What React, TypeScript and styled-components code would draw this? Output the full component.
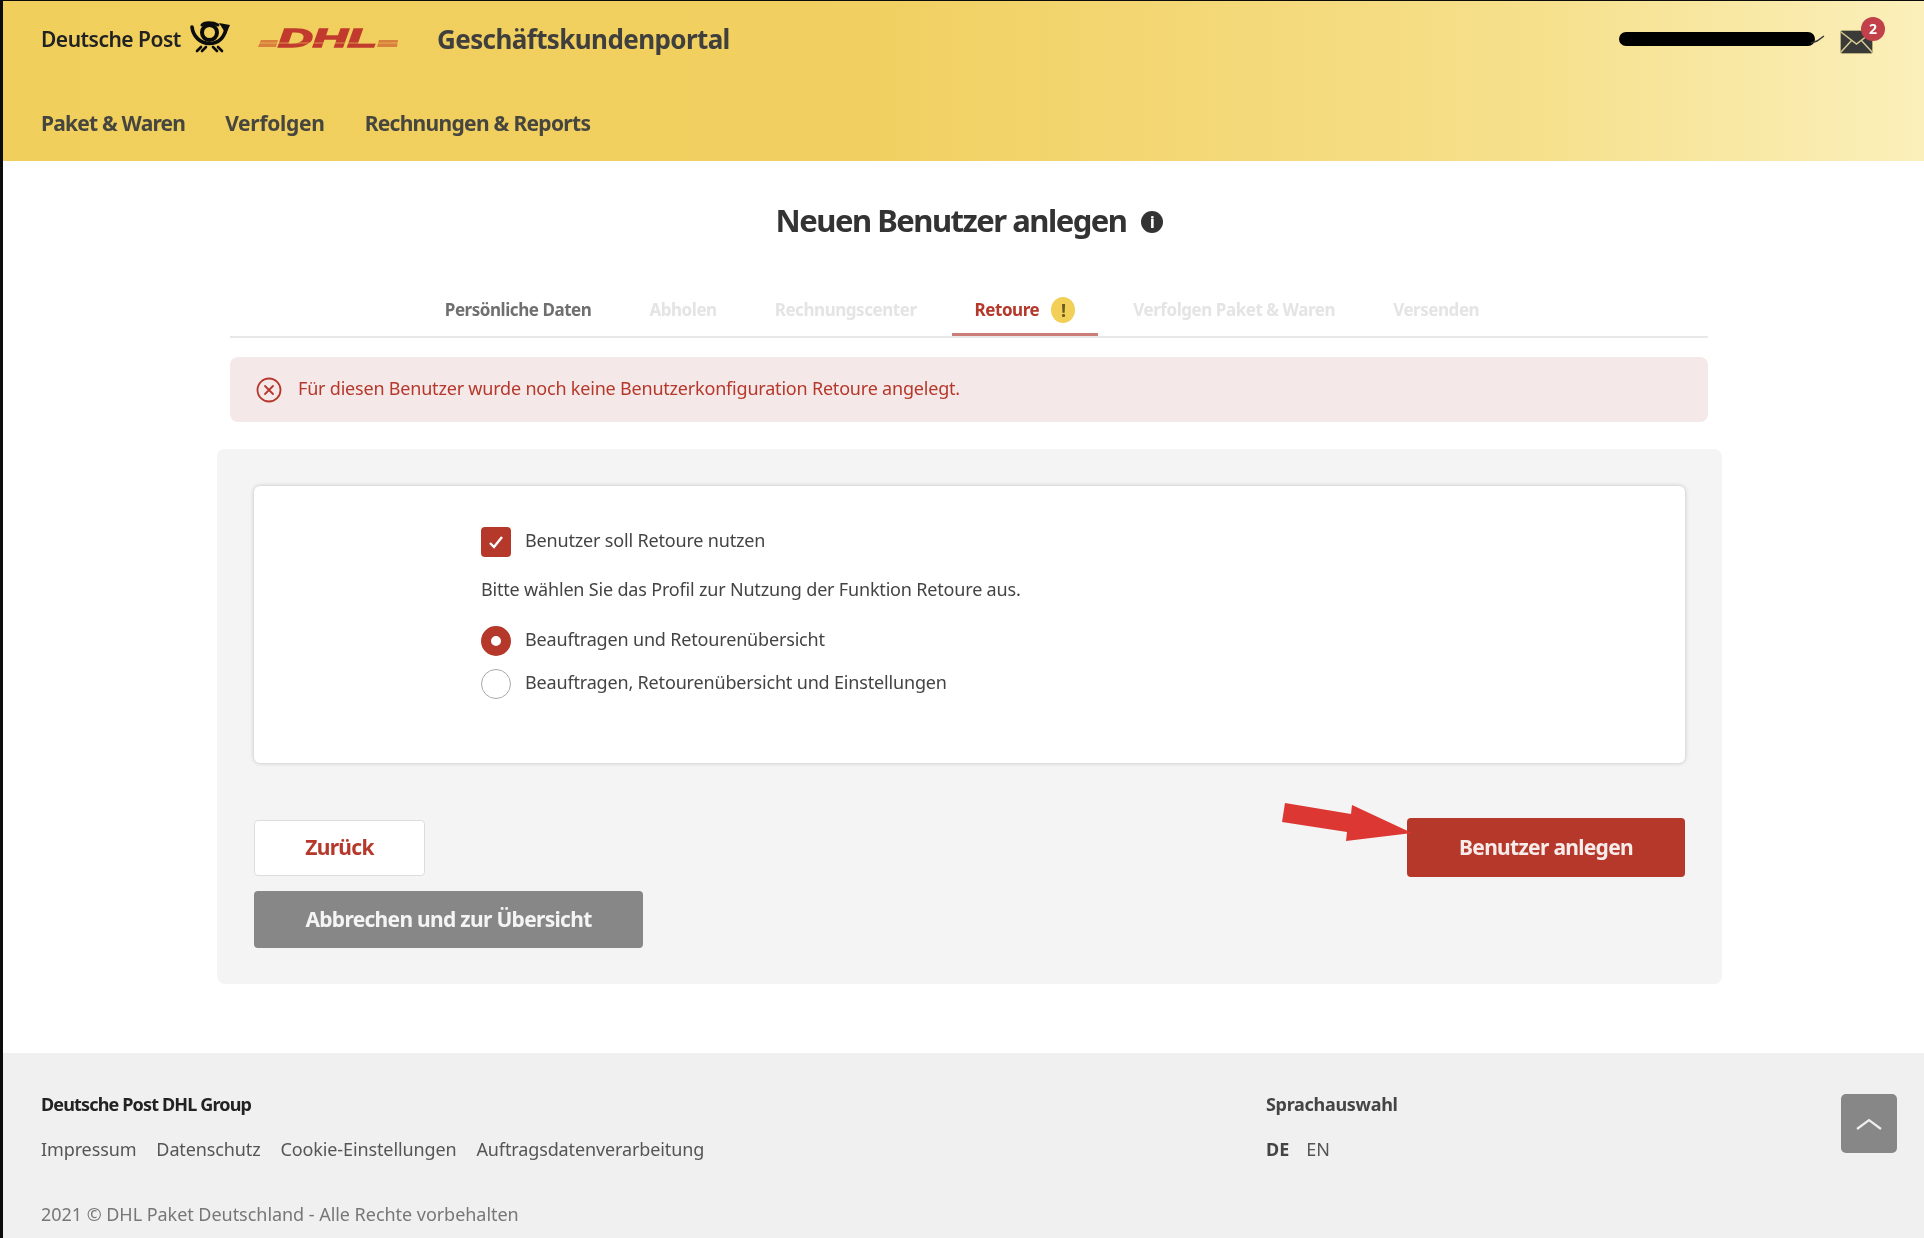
import React from 'react'
import styled, { createGlobalStyle } from 'styled-components'

const GlobalStyle = createGlobalStyle`
    html, body {
        margin: 0;
        padding: 0;
        background: #0c0c0c;
    }
    * {
        box-sizing: border-box;
    }
`

const tabs = [
    { label: 'Persönliche Daten', state: 'done' },
    { label: 'Abholen', state: 'off' },
    { label: 'Rechnungscenter', state: 'off' },
    { label: 'Retoure', state: 'active' },
    { label: 'Verfolgen Paket & Waren', state: 'off' },
    { label: 'Versenden', state: 'off' },
]

const footerLinks = ['Impressum', 'Datenschutz', 'Cookie-Einstellungen', 'Auftragsdatenverarbeitung']

const PostHorn = () => (
    <svg width="40" height="33" viewBox="0 0 40 33">
        <g fill="none" stroke="#0c0c0c" strokeLinecap="round">
            <circle cx="19.5" cy="12.5" r="7.5" strokeWidth="4" />
            <path d="M2 7 C3 16 10 23.5 19.5 23.5 C28 23.5 34 18 36 9" strokeWidth="3.6" />
            <path d="M12 5 C14 2 23 2 28 5" strokeWidth="3" />
            <path d="M7 31 L11 27 M12 31 L16 27 M23 27 L27 31 M28 27 L32 31" strokeWidth="2.6" />
        </g>
        <polygon points="29,3 40,5 36,14" fill="#0c0c0c" />
    </svg>
)

const DhlLogo = () => (
    <svg width="140" height="24" viewBox="0 0 140 24">
        <polygon points="3,13 20,13 18,20 0,20" fill="#d9803c" />
        <polygon points="121,13 140,13 139,20 119,20" fill="#d9803c" />
        <text
            x="20"
            y="20"
            fontFamily="'Liberation Sans', sans-serif"
            fontSize="25"
            fontWeight="700"
            fontStyle="italic"
            textLength="99"
            lengthAdjust="spacingAndGlyphs"
            stroke="#c23a2e"
            strokeWidth="1.4"
            fill="#c23a2e"
        >
            DHL
        </text>
        <rect x="0" y="15.5" width="140" height="1" fill="#f0cf5c" opacity="0.6" />
    </svg>
)

const App = () => {
    return (
        <>
            <GlobalStyle />
            <Page>
                <Header>
                    <TopRow>
                        <Brand>Deutsche Post</Brand>
                        <HornSlot><PostHorn /></HornSlot>
                        <DhlSlot><DhlLogo /></DhlSlot>
                        <PortalTitle>Geschäftskundenportal</PortalTitle>
                        <UserArea>
                            <svg width="206" height="16" viewBox="0 0 206 16">
                                <rect x="0" y="1" width="196" height="14" rx="7" fill="#000" />
                                <path d="M192 12 L198 10 L205 5" stroke="#333" strokeWidth="1.4" fill="none" />
                            </svg>
                            <MailWrap>
                                <svg width="33" height="24" viewBox="0 0 33 24">
                                    <rect x="0.5" y="0.5" width="32" height="23" rx="2" fill="#3a3a38" stroke="#b9ad78" />
                                    <path d="M1 2 L16.5 14 L32 2 M1 22 L12 10 M32 22 L21 10" stroke="#d6cb92" strokeWidth="1.5" fill="none" />
                                </svg>
                                <MailBadge>2</MailBadge>
                            </MailWrap>
                        </UserArea>
                    </TopRow>
                    <Nav>
                        <NavItem>Paket &amp; Waren</NavItem>
                        <NavItem>Verfolgen</NavItem>
                        <NavItem>Rechnungen &amp; Reports</NavItem>
                    </Nav>
                </Header>

                <Main>
                    <Heading>
                        <h1>Neuen Benutzer anlegen</h1>
                        <InfoDot>i</InfoDot>
                    </Heading>

                    <TabBar>
                        {tabs.map((tab) => (
                            <Tab key={tab.label} $state={tab.state}>
                                {tab.label}
                                {tab.state === 'active' && <WarnBadge>!</WarnBadge>}
                            </Tab>
                        ))}
                    </TabBar>

                    <Alert>
                        <svg width="26" height="26" viewBox="0 0 26 26" fill="none" stroke="#b5382b" strokeWidth="1.8">
                            <circle cx="13" cy="13" r="11.5" />
                            <path d="M9 9 L17 17 M17 9 L9 17" strokeLinecap="round" />
                        </svg>
                        <AlertText>Für diesen Benutzer wurde noch keine Benutzerkonfiguration Retoure angelegt.</AlertText>
                    </Alert>

                    <Panel>
                        <Card>
                            <CheckRow>
                                <CheckBox>
                                    <svg width="16" height="14" viewBox="0 0 16 14" fill="none" stroke="#fff" strokeWidth="2.4">
                                        <path d="M2 8 L6 12 L14 2" />
                                    </svg>
                                </CheckBox>
                                <OptionText>Benutzer soll Retoure nutzen</OptionText>
                            </CheckRow>
                            <Hint>Bitte wählen Sie das Profil zur Nutzung der Funktion Retoure aus.</Hint>
                            <RadioRow>
                                <Radio $checked />
                                <OptionText>Beauftragen und Retourenübersicht</OptionText>
                            </RadioRow>
                            <RadioRow>
                                <Radio />
                                <OptionText>Beauftragen, Retourenübersicht und Einstellungen</OptionText>
                            </RadioRow>
                        </Card>

                        <Actions>
                            <LeftActions>
                                <BackButton>Zurück</BackButton>
                                <CancelButton>Abbrechen und zur Übersicht</CancelButton>
                            </LeftActions>
                            <SubmitWrap>
                                <Arrow width="132" height="40" viewBox="0 0 132 40">
                                    <polygon points="3,0 0,19 65,29 64,38 130,30 70,2 69,11" fill="#dc3732" />
                                </Arrow>
                                <SubmitButton>Benutzer anlegen</SubmitButton>
                            </SubmitWrap>
                        </Actions>
                    </Panel>
                </Main>

                <Footer>
                    <FooterLeft>
                        <FooterTitle>Deutsche Post DHL Group</FooterTitle>
                        <FooterLinks>
                            {footerLinks.map((link) => <FooterLink key={link}>{link}</FooterLink>)}
                        </FooterLinks>
                        <Copyright>2021 © DHL Paket Deutschland - Alle Rechte vorbehalten</Copyright>
                    </FooterLeft>
                    <Language>
                        <LanguageTitle>Sprachauswahl</LanguageTitle>
                        <LanguageRow>
                            <strong>DE</strong>
                            <span>EN</span>
                        </LanguageRow>
                    </Language>
                    <ScrollTop>
                        <svg width="28" height="16" viewBox="0 0 28 16" fill="none" stroke="#eee" strokeWidth="2.2">
                            <path d="M2 13 L14 4 L26 13" />
                        </svg>
                    </ScrollTop>
                </Footer>
            </Page>
        </>
    )
}

const fontStack = `"Noto Sans", "Liberation Sans", sans-serif`

const Page = styled.div`
    width: 1924px;
    height: 1238px;
    padding: 1px 0 0 3px;
    font-family: ${fontStack};
    color: #333;
    overflow: hidden;
    filter: blur(0.6px);
`

const Header = styled.header`
    height: 160px;
    padding: 0 0 0 38px;
    background: linear-gradient(90deg, #f0cf5c 0%, #f1d061 45%, #f6e08c 80%, #fbf0bb 100%);
`

const TopRow = styled.div`
    height: 76px;
    display: flex;
    align-items: center;
`

const Brand = styled.span`
    width: 149px;
    font-size: 21px;
    font-weight: 600;
    letter-spacing: -0.5px;
    white-space: nowrap;
    color: #222;
`

const HornSlot = styled.div`
    width: 68px;
    display: flex;
    margin-top: -6px;
`

const DhlSlot = styled.div`
    width: 179px;
    display: flex;
`

const PortalTitle = styled.span`
    font-size: 26px;
    font-weight: 700;
    letter-spacing: -0.6px;
    color: #3f3f3d;
`

const UserArea = styled.div`
    margin-left: auto;
    padding-right: 51px;
    display: flex;
    align-items: center;
    gap: 15px;
`

const MailWrap = styled.div`
    position: relative;
    display: flex;
    margin-top: 6px;
`

const MailBadge = styled.span`
    position: absolute;
    top: -13px;
    right: -12px;
    width: 24px;
    height: 24px;
    border-radius: 50%;
    background: #c2404a;
    color: #fff;
    font-size: 14px;
    font-weight: 700;
    text-align: center;
    line-height: 24px;
`

const Nav = styled.nav`
    display: flex;
    gap: 40px;
    margin-top: 33px;
`

const NavItem = styled.a`
    font-size: 21px;
    font-weight: 700;
    letter-spacing: -0.8px;
    line-height: 26px;
    color: #46463f;

    &:nth-child(2) {
        letter-spacing: -0.3px;
    }
    &:nth-child(3) {
        letter-spacing: -0.7px;
    }
`

const Main = styled.main`
    height: 892px;
    padding: 30px 202px 0 214px;
    background: #fff;
`

const Heading = styled.div`
    height: 58px;
    display: flex;
    justify-content: center;
    align-items: center;
    gap: 15px;

    h1 {
        margin: 0;
        font-size: 31px;
        font-weight: 700;
        letter-spacing: -1.5px;
        color: #333;
    }
`

const InfoDot = styled.span`
    width: 22px;
    height: 22px;
    margin-top: 3px;
    border-radius: 50%;
    background: #333;
    color: #fff;
    font-size: 15px;
    font-weight: 800;
    line-height: 22px;
    text-align: center;
`

const TabBar = styled.div`
    height: 50px;
    margin: 39px 14px 0 13px;
    padding-right: 14px;
    display: flex;
    justify-content: center;
    gap: 12px;
    border-bottom: 2px solid #e8e8e8;
`

const tabColor = (state: string) => {
    if (state === 'active') return '#b5382b'
    if (state === 'done') return '#6f6f6f'
    return '#e4e4e4'
}

const Tab = styled.div<{ $state: string }>`
    height: 48px;
    padding: 0 23px 2px;
    display: flex;
    align-items: center;
    gap: 12px;
    font-size: 17px;
    font-weight: 700;
    letter-spacing: -0.45px;
    color: ${(props) => tabColor(props.$state)};
    border-bottom: ${(props) => (props.$state === 'active' ? '3px solid #cc7f78' : '3px solid transparent')};
`

const WarnBadge = styled.span`
    width: 24px;
    height: 26px;
    border-radius: 50%;
    background: #f2cf57;
    color: #6a5a20;
    font-size: 18px;
    line-height: 26px;
    text-align: center;
`

const Alert = styled.div`
    height: 65px;
    margin: 19px 14px 0 13px;
    padding: 0 0 0 26px;
    display: flex;
    align-items: center;
    gap: 16px;
    border-radius: 8px;
    background: #f5e8e9;
    color: #b5382b;
    font-size: 18px;
    letter-spacing: -0.2px;
`

const AlertText = styled.span`
    margin-top: -4px;
`

const Panel = styled.section`
    height: 535px;
    margin-top: 27px;
    padding: 37px 37px 0;
    border-radius: 8px;
    background: #f4f4f4;
`

const Card = styled.div`
    height: 277px;
    padding: 41px 0 0 227px;
    background: #fff;
    border-radius: 6px;
    box-shadow: 0 0 4px rgba(0, 0, 0, 0.22);
`

const CheckRow = styled.div`
    display: flex;
    align-items: center;
    gap: 14px;
`

const CheckBox = styled.span`
    width: 30px;
    height: 30px;
    border-radius: 4px;
    background: #b5382b;
    display: flex;
    align-items: center;
    justify-content: center;
`

const OptionText = styled.span`
    font-size: 18px;
    letter-spacing: -0.17px;
    color: #444;
    margin-top: -5px;
`

const Hint = styled.p`
    margin: 19px 0 0;
    height: 31px;
    font-size: 18px;
    letter-spacing: -0.18px;
    line-height: 26px;
    color: #444;
`

const RadioRow = styled.div`
    height: 30px;
    margin-top: 19px;
    display: flex;
    align-items: center;
    gap: 14px;

    & + & {
        margin-top: 13px;
    }
`

const Radio = styled.span<{ $checked?: boolean }>`
    width: 30px;
    height: 30px;
    border-radius: 50%;
    background: #fff;
    border: ${(props) => (props.$checked ? '10px solid #b5382b' : '1.5px solid #aaa')};
`

const Actions = styled.div`
    margin-top: 55px;
    display: flex;
    justify-content: space-between;
    align-items: flex-start;
`

const LeftActions = styled.div`
    padding-top: 2px;
    display: flex;
    flex-direction: column;
    align-items: flex-start;
    gap: 15px;
`

const BaseButton = styled.button`
    height: 57px;
    padding-bottom: 3px;
    border-radius: 4px;
    border: none;
    font-family: ${fontStack};
    font-size: 21px;
    font-weight: 700;
    letter-spacing: -0.7px;
`

const BackButton = styled(BaseButton)`
    width: 171px;
    height: 56px;
    background: #fff;
    color: #b5382b;
    border: 1.5px solid #ddd;
`

const CancelButton = styled(BaseButton)`
    width: 389px;
    background: #878787;
    color: #f4f4f4;
`

const SubmitWrap = styled.div`
    position: relative;
`

const Arrow = styled.svg`
    position: absolute;
    left: -125px;
    top: -15px;
    z-index: 1;
`

const SubmitButton = styled(BaseButton)`
    width: 278px;
    height: 59px;
    background: #b5382b;
    color: #f8ecea;
`

const Footer = styled.footer`
    height: 185px;
    padding: 39px 27px 0 38px;
    background: #f0f0f0;
    display: flex;
    align-items: flex-start;
`

const FooterLeft = styled.div`
    width: 1225px;
`

const FooterTitle = styled.div`
    font-size: 18px;
    font-weight: 700;
    letter-spacing: -0.85px;
    line-height: 24px;
    color: #222;
`

const FooterLinks = styled.div`
    margin-top: 21px;
    display: flex;
    gap: 20px;
`

const FooterLink = styled.a`
    font-size: 18px;
    letter-spacing: -0.12px;
    line-height: 24px;
    color: #555;
`

const Copyright = styled.div`
    margin-top: 41px;
    font-size: 18px;
    letter-spacing: -0.04px;
    line-height: 24px;
    color: #777;
`

const Language = styled.div`
    flex: 1;
`

const LanguageTitle = styled.div`
    font-size: 18px;
    font-weight: 700;
    letter-spacing: -0.3px;
    line-height: 24px;
    color: #444;
`

const LanguageRow = styled.div`
    margin-top: 21px;
    display: flex;
    gap: 17px;
    font-size: 18px;
    line-height: 24px;
    color: #555;

    strong {
        color: #444;
    }
`

const ScrollTop = styled.button`
    width: 56px;
    height: 59px;
    margin-top: 2px;
    border: none;
    border-radius: 5px;
    background: #878787;
    display: flex;
    align-items: center;
    justify-content: center;
`

export default App
